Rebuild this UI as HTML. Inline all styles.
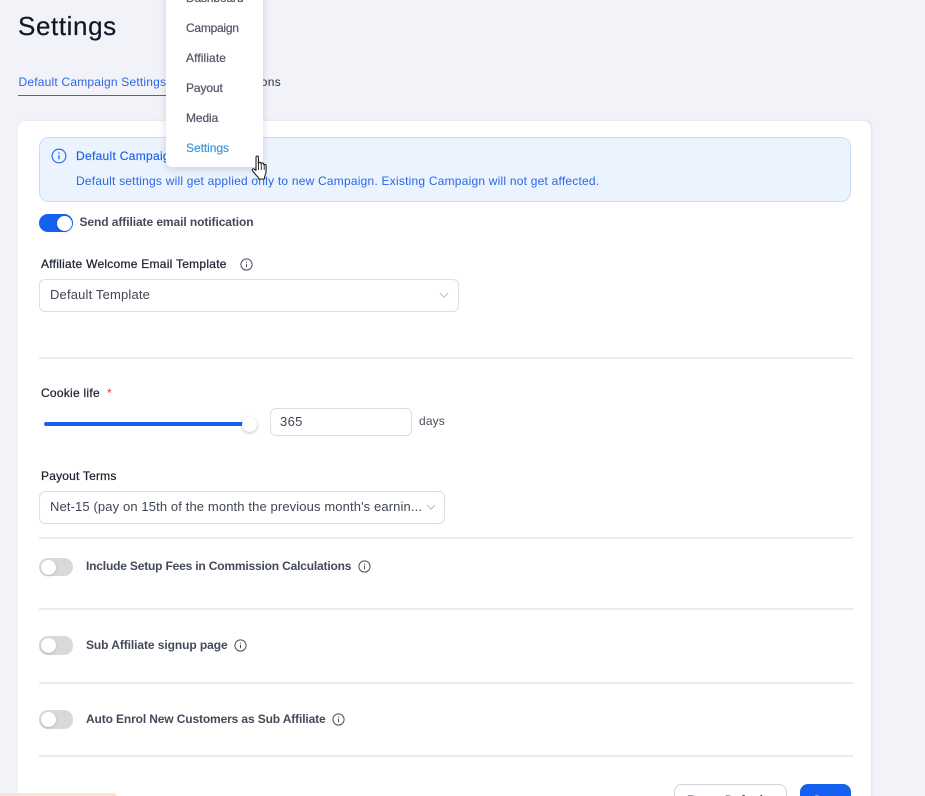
<!DOCTYPE html>
<html style="height:796px;width:925px;overflow:hidden"><head><meta charset="utf-8">
<style>
html,body{margin:0;padding:0}
body{width:925px;height:796px;overflow:hidden;background:#f2f3f8;font-family:"Liberation Sans",Arial,sans-serif}
#w{position:absolute;left:0;top:0;width:925px;height:796px;overflow:hidden;background:#f2f3f8}
.a{position:absolute;white-space:nowrap}
.hr{position:absolute;left:39px;width:814px;height:2px;background:#ebecf1}
.tg{position:absolute;left:39px;width:34px;height:18px;border-radius:9px;background:#d9d9d9}
.tg i{position:absolute;left:1.5px;top:1.5px;width:15px;height:15px;border-radius:50%;background:#fff;box-shadow:0 1px 2px rgba(0,0,0,.18)}
.lb{font-size:12px;font-weight:bold;color:#434a59;line-height:16px}
.fl{font-size:12px;color:#1c2430;line-height:16px;letter-spacing:.26px;-webkit-text-stroke:.25px #1c2430}
.box{position:absolute;background:#fff;border:1px solid #dcdfe6;border-radius:6px;box-sizing:border-box}
.val{font-size:13px;color:#3f4654;line-height:16px}
.m{font-size:12px;color:#535a67;line-height:16px;left:186px;-webkit-text-stroke:.25px #535a67}
</style></head><body><div id="w">
<div class="a" style="left:18px;top:10px;font-size:26px;line-height:32px;color:#101828;letter-spacing:.6px;-webkit-text-stroke:.2px #101828">Settings</div>
<div class="a" style="left:18.5px;top:74px;font-size:12px;line-height:16px;color:#2e66e8;letter-spacing:.2px">Default Campaign Settings</div>
<div class="a" style="left:18px;top:95px;width:150px;height:1px;background:#2468f2"></div>
<div class="a" style="left:200px;top:74px;font-size:12px;line-height:16px;color:#2a303b;letter-spacing:.3px;width:81px;text-align:right">Notifications</div>

<div class="a" style="left:18px;top:121px;width:853px;height:700px;background:#fff;border-radius:8px;box-shadow:1px 0 3px rgba(40,50,90,.1)"></div>

<div class="a" style="left:39px;top:137px;width:812px;height:65px;box-sizing:border-box;background:#eaf3fe;border:1px solid #c9def8;border-radius:10px"></div>
<svg class="a" style="left:51px;top:148px" width="16" height="16" viewBox="0 0 16 16" fill="none" stroke="#2e6fe8" stroke-width="1.2"><circle cx="8" cy="8" r="6.9"/><path d="M8 7.3v4" stroke-width="1.4"/><path d="M8 4.4v1.4" stroke-width="1.4"/></svg>
<div class="a" style="left:76px;top:148px;font-size:12px;line-height:16px;color:#1f5fe6;letter-spacing:.3px;-webkit-text-stroke:.15px #1f5fe6">Default Campaign Settings</div>
<div class="a" style="left:76px;top:173px;font-size:12px;line-height:16px;color:#2a66e8;letter-spacing:.215px">Default settings will get applied only to new Campaign. Existing Campaign will not get affected.</div>

<div class="tg" style="top:214px;background:#1560ef"><i style="left:17.5px;top:1.5px"></i></div>
<div class="a lb" style="left:79.5px;top:214px;letter-spacing:-.08px">Send affiliate email notification</div>

<div class="a fl" style="left:41px;top:256px">Affiliate Welcome Email Template</div>
<svg class="a" style="left:240px;top:258px" width="13" height="13" viewBox="0 0 13 13" fill="none" stroke="#4a505c" stroke-width="1"><circle cx="6.5" cy="6.5" r="5.6"/><path d="M6.5 5.8v3.4M6.5 3.6v1"/></svg>
<div class="box" style="left:39px;top:279px;width:420px;height:33px"></div>
<div class="a val" style="left:50px;top:287px;letter-spacing:.17px">Default Template</div>
<svg class="a" style="left:439px;top:292px" width="10" height="7" viewBox="0 0 10 7" fill="none" stroke="#b4b8c0" stroke-width="1"><path d="M1 1.2l4 4 4-4"/></svg>

<div class="hr" style="top:357px"></div>

<div class="a fl" style="left:41px;top:385px">Cookie life</div>
<div class="a" style="left:107px;top:385px;font-size:12px;line-height:16px;color:#e53935">*</div>
<div class="a" style="left:44px;top:422px;width:205px;height:4px;background:#1560ef;border-radius:2px"></div>
<div class="a" style="left:242px;top:417px;width:15px;height:15px;border-radius:50%;background:#fff;box-shadow:0 1px 3px rgba(0,0,0,.25)"></div>
<div class="box" style="left:270px;top:408px;width:142px;height:28px"></div>
<div class="a val" style="left:280px;top:414px;letter-spacing:.36px">365</div>
<div class="a" style="left:419px;top:413px;font-size:12px;line-height:16px;color:#4a505c;letter-spacing:.15px">days</div>

<div class="a fl" style="left:41px;top:468px;letter-spacing:.2px">Payout Terms</div>
<div class="box" style="left:39px;top:491px;width:406px;height:33px"></div>
<div class="a val" style="left:50px;top:499px;letter-spacing:.12px">Net-15 (pay on 15th of the month the previous month's earnin...</div>
<svg class="a" style="left:426px;top:504px" width="10" height="7" viewBox="0 0 10 7" fill="none" stroke="#b4b8c0" stroke-width="1"><path d="M1 1.2l4 4 4-4"/></svg>

<div class="hr" style="top:537px"></div>

<div class="tg" style="top:558px"><i></i></div>
<div class="a lb" style="left:86px;top:558px;letter-spacing:-.18px">Include Setup Fees in Commission Calculations</div>
<svg class="a" style="left:358px;top:560px" width="13" height="13" viewBox="0 0 13 13" fill="none" stroke="#4a505c" stroke-width="1"><circle cx="6.5" cy="6.5" r="5.6"/><path d="M6.5 5.8v3.4M6.5 3.6v1"/></svg>

<div class="hr" style="top:608px"></div>

<div class="tg" style="top:636px;height:19px"><i style="top:2px"></i></div>
<div class="a lb" style="left:86px;top:637px;letter-spacing:-.08px">Sub Affiliate signup page</div>
<svg class="a" style="left:234px;top:639px" width="13" height="13" viewBox="0 0 13 13" fill="none" stroke="#4a505c" stroke-width="1"><circle cx="6.5" cy="6.5" r="5.6"/><path d="M6.5 5.8v3.4M6.5 3.6v1"/></svg>

<div class="hr" style="top:682px"></div>

<div class="tg" style="top:710px;height:19px"><i style="top:2px"></i></div>
<div class="a lb" style="left:86px;top:711px;letter-spacing:-.13px">Auto Enrol New Customers as Sub Affiliate</div>
<svg class="a" style="left:332px;top:713px" width="13" height="13" viewBox="0 0 13 13" fill="none" stroke="#4a505c" stroke-width="1"><circle cx="6.5" cy="6.5" r="5.6"/><path d="M6.5 5.8v3.4M6.5 3.6v1"/></svg>

<div class="hr" style="top:755px"></div>

<div class="box" style="left:674px;top:784px;width:113px;height:34px;border-color:#d0d5dd;border-radius:8px"></div>
<div class="a" style="left:687px;top:792px;font-size:12px;line-height:16px;color:#3a4150;font-weight:bold;letter-spacing:.3px">Reset Default</div>
<div class="a" style="left:800px;top:784px;width:51px;height:34px;background:#1560ef;border-radius:8px"></div>
<div class="a" style="left:813px;top:792px;font-size:12px;line-height:16px;color:#fff;font-weight:bold">Save</div>

<div class="a" style="left:-10px;top:793px;width:128px;height:12px;background:#fde2d9;border-radius:6px"></div>

<!-- dropdown -->
<div class="a" style="left:166px;top:-10px;width:97px;height:177px;background:#fff;border-radius:0 0 6px 6px;box-shadow:0 2px 8px rgba(30,40,70,.16)"></div>
<div class="a m" style="top:-10px;letter-spacing:-.15px">Dashboard</div>
<div class="a m" style="top:20px;letter-spacing:-.25px">Campaign</div>
<div class="a m" style="top:50px;letter-spacing:.1px">Affiliate</div>
<div class="a m" style="top:80px;letter-spacing:-.1px">Payout</div>
<div class="a m" style="top:110px;letter-spacing:-.1px">Media</div>
<div class="a m" style="top:140px;color:#3a9ad9;-webkit-text-stroke:.2px #3a9ad9;letter-spacing:-.05px">Settings</div>

<!-- hand cursor -->
<svg class="a" style="left:251px;top:155px" width="19" height="26" viewBox="0 0 19 26"><path d="M5 2.2c0-1.5 2.4-1.5 2.4 0V9l.4-1.2c.5-1 2.1-.8 2.2.3l.2 1 .4-.6c.6-.9 2.1-.5 2.1.6l.1.8.4-.3c.8-.5 1.9 0 1.9 1v5.6c0 2.2-.5 3.6-1.5 5.2V24H7.2v-1.6C5.4 20.6 3.7 18.7 1.6 15.8c-.9-1.3.7-2.7 1.9-1.6L5 15.5z" fill="#fff" stroke="#222" stroke-width="1.1" stroke-linejoin="round"/><path d="M7.5 9v6M10.3 9.5V15M13.2 10v5" stroke="#222" stroke-width=".9" fill="none"/></svg>
</div></body></html>
